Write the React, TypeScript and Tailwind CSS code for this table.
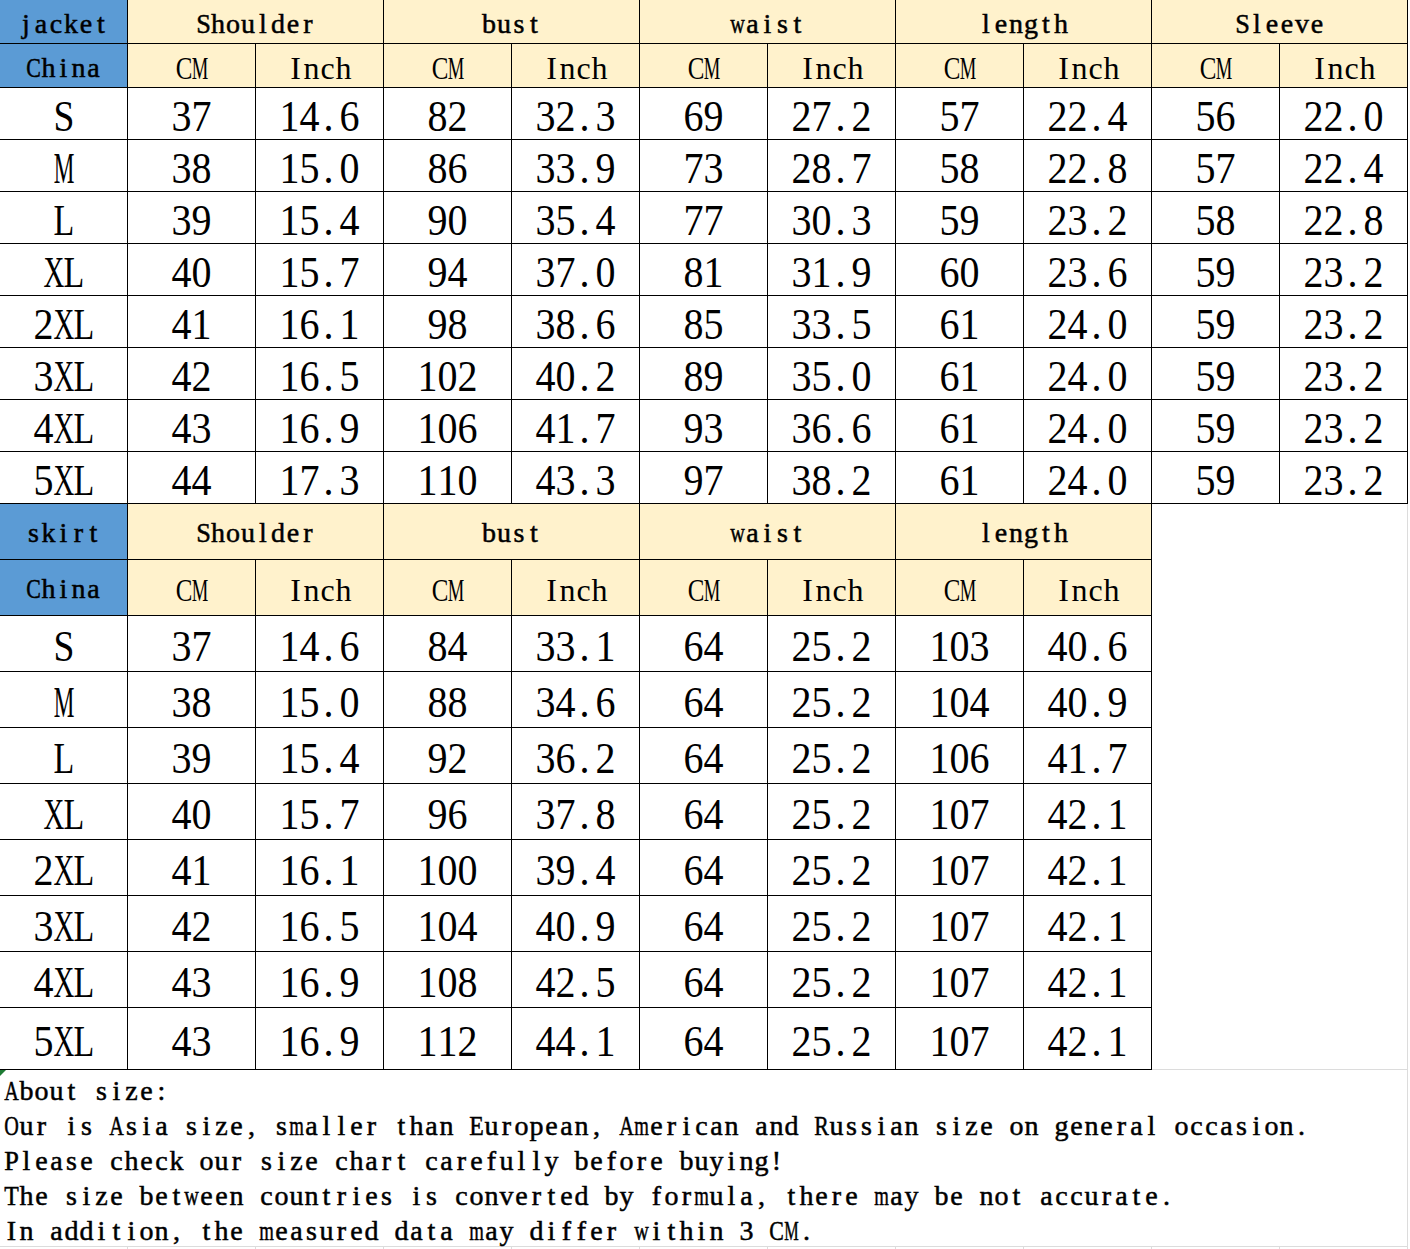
import React from 'react';
import clsx from 'clsx';

const SCALE: Record<string, string> = {
  M: 'scale-x-[0.58]',
  W: 'scale-x-[0.55]',
  A: 'scale-x-[0.72]',
  D: 'scale-x-[0.72]',
  G: 'scale-x-[0.72]',
  H: 'scale-x-[0.72]',
  K: 'scale-x-[0.72]',
  N: 'scale-x-[0.72]',
  O: 'scale-x-[0.72]',
  Q: 'scale-x-[0.72]',
  U: 'scale-x-[0.72]',
  V: 'scale-x-[0.72]',
  X: 'scale-x-[0.72]',
  Y: 'scale-x-[0.72]',
  C: 'scale-x-[0.78]',
  B: 'scale-x-[0.78]',
  R: 'scale-x-[0.78]',
  E: 'scale-x-[0.85]',
  L: 'scale-x-[0.85]',
  T: 'scale-x-[0.85]',
  Z: 'scale-x-[0.85]',
  F: 'scale-x-[0.94]',
  P: 'scale-x-[0.94]',
  S: 'scale-x-[0.94]',
  m: 'scale-x-[0.67]',
  w: 'scale-x-[0.72]',
};

function Glyphs({ text, box, tall }: { text: string; box: string; tall?: boolean }) {
  return (
    <span className="inline-flex">
      {text.split('').map((ch, i) => (
        <span
          key={i}
          className={clsx(
            'inline-flex shrink-0',
            ch === '.' && tall ? 'justify-start pl-[4px]' : 'justify-center',
            box,
            SCALE[ch],
            tall && 'scale-y-110'
          )}
        >
          {ch === ' ' ? '\u00a0' : ch}
        </span>
      ))}
    </span>
  );
}

function Cell({ children, className }: { children?: React.ReactNode; className?: string }) {
  return (
    <div className={clsx('flex items-center justify-center border-r border-b border-black', className)}>
      {children}
    </div>
  );
}

const jacket = [
  ['S', '37', '14.6', '82', '32.3', '69', '27.2', '57', '22.4', '56', '22.0'],
  ['M', '38', '15.0', '86', '33.9', '73', '28.7', '58', '22.8', '57', '22.4'],
  ['L', '39', '15.4', '90', '35.4', '77', '30.3', '59', '23.2', '58', '22.8'],
  ['XL', '40', '15.7', '94', '37.0', '81', '31.9', '60', '23.6', '59', '23.2'],
  ['2XL', '41', '16.1', '98', '38.6', '85', '33.5', '61', '24.0', '59', '23.2'],
  ['3XL', '42', '16.5', '102', '40.2', '89', '35.0', '61', '24.0', '59', '23.2'],
  ['4XL', '43', '16.9', '106', '41.7', '93', '36.6', '61', '24.0', '59', '23.2'],
  ['5XL', '44', '17.3', '110', '43.3', '97', '38.2', '61', '24.0', '59', '23.2'],
];

const skirt = [
  ['S', '37', '14.6', '84', '33.1', '64', '25.2', '103', '40.6'],
  ['M', '38', '15.0', '88', '34.6', '64', '25.2', '104', '40.9'],
  ['L', '39', '15.4', '92', '36.2', '64', '25.2', '106', '41.7'],
  ['XL', '40', '15.7', '96', '37.8', '64', '25.2', '107', '42.1'],
  ['2XL', '41', '16.1', '100', '39.4', '64', '25.2', '107', '42.1'],
  ['3XL', '42', '16.5', '104', '40.9', '64', '25.2', '107', '42.1'],
  ['4XL', '43', '16.9', '108', '42.5', '64', '25.2', '107', '42.1'],
  ['5XL', '43', '16.9', '112', '44.1', '64', '25.2', '107', '42.1'],
];

const serif = "font-['Liberation_Serif',serif] text-black";
const label = "font-['Liberation_Serif',serif] text-black text-[28px] [-webkit-text-stroke:0.5px_black]";

function HeaderRows({ name, groups, pad }: { name: string; groups: string[]; pad: string }) {
  return (
    <>
      <Cell className={clsx('bg-[#5b9bd5]', pad, label)}>
        <Glyphs text={name} box="w-[15px]" />
      </Cell>
      {groups.map((g) => (
        <Cell key={g} className={clsx('col-span-2 bg-[#fff2cc]', pad, label)}>
          <Glyphs text={g} box="w-[15px]" />
        </Cell>
      ))}
      <Cell className={clsx('bg-[#5b9bd5]', pad, label)}>
        <Glyphs text="China" box="w-[15px]" />
      </Cell>
      {groups.map((g) => (
        <React.Fragment key={g + 'u'}>
          <Cell className={clsx('bg-[#fff2cc] pt-[4px] text-[32px]', serif)}>
            <Glyphs text="CM" box="w-[16px]" />
          </Cell>
          <Cell className={clsx('bg-[#fff2cc] pt-[4px] text-[32px]', serif)}>
            <Glyphs text="Inch" box="w-[16px]" />
          </Cell>
        </React.Fragment>
      ))}
    </>
  );
}

function DataRows({ rows }: { rows: string[][] }) {
  return (
    <>
      {rows.map((r, ri) =>
        r.map((v, ci) => (
          <Cell key={ri + '-' + ci} className={clsx('pt-[6px] text-[40px]', serif)}>
            <Glyphs text={v} box="w-[20px]" tall />
          </Cell>
        ))
      )}
    </>
  );
}

const notes = [
  'About size:',
  'Our is Asia size, smaller than European, American and Russian size on general occasion.',
  'Please check our size chart carefully before buying!',
  'The size between countries is converted by formula, there may be not accurate.',
  'In addition, the measured data may differ within 3 CM.',
];

export default function App() {
  return (
    <div className="w-[1410px] h-[1249px] bg-white overflow-hidden">
      <div className="grid w-[1408px] grid-cols-[repeat(11,128px)] grid-rows-[44px_44px_repeat(8,52px)]">
        <HeaderRows name="jacket" pad="pt-[4px]" groups={['Shoulder', 'bust', 'waist', 'length', 'Sleeve']} />
        <DataRows rows={jacket} />
      </div>
      <div className="flex">
        <div className="grid w-[1152px] grid-cols-[repeat(9,128px)] grid-rows-[56px_56px_repeat(7,56px)_62px]">
          <HeaderRows name="skirt" pad="pt-[2px]" groups={['Shoulder', 'bust', 'waist', 'length']} />
          <DataRows rows={skirt} />
        </div>
        <div className="w-[256px] border-r border-b border-[#dcdcdc]" />
      </div>
      <div className="relative h-[177px] w-[1408px] border-r border-b border-[#dcdcdc] pl-[4px] pt-[3px]">
        <div className="absolute left-0 top-0 h-0 w-0 border-t-[6px] border-r-[6px] border-t-[#1e7b34] border-r-transparent" />
        <div className={clsx('flex flex-col leading-[35px]', label)}>
          {notes.map((n) => (
            <div key={n} className="flex h-[35px] items-center">
              <Glyphs text={n} box="w-[15px]" />
            </div>
          ))}
        </div>
      </div>
      <div className="grid h-[3px] grid-cols-[repeat(11,128px)]">
        {Array.from({ length: 11 }).map((_, i) => (
          <div key={i} className="border-r border-[#dcdcdc]" />
        ))}
      </div>
    </div>
  );
}
